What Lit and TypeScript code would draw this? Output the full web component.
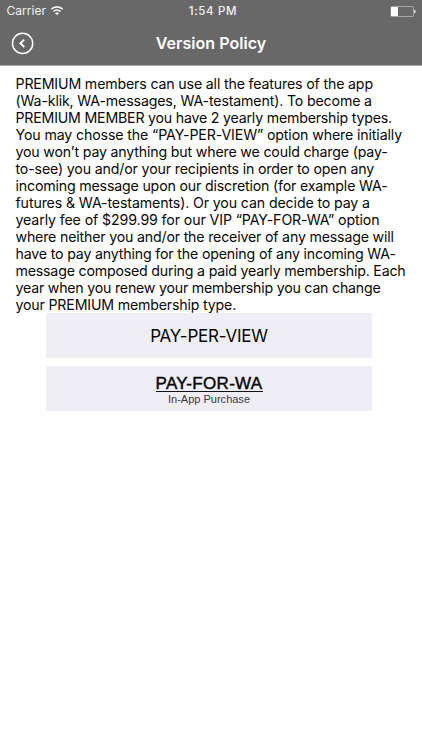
import { LitElement, html, css } from "lit";
import { customElement, property } from "lit/decorators.js";

/** One line of text whose tracking is adjusted to reach a set width. */
@customElement("fit-text")
class FitText extends LitElement {
  @property({ type: Number }) width = 0;
  @property() text = "";

  static styles = css`
    :host { display: block; white-space: nowrap; }
    .run { display: inline-block; white-space: pre; }
  `;

  async firstUpdated() {
    await document.fonts.ready;
    const run = this.renderRoot.querySelector<HTMLElement>(".run")!;
    const natural = run.getBoundingClientRect().width;
    const spacing = (this.width - natural) / this.text.length;
    run.style.letterSpacing = `${spacing.toFixed(4)}px`;
  }

  render() {
    return html`<span class="run">${this.text}</span>`;
  }
}

const LINES: [string, number][] = [
  ["PREMIUM members can use all the features of the app", 357.4],
  ["(Wa-klik, WA-messages, WA-testament). To become a", 356.4],
  ["PREMIUM MEMBER you have 2 yearly membership types.", 376.4],
  ["You may chosse the “PAY-PER-VIEW” option where initially", 386.5],
  ["you won’t pay anything but where we could charge (pay-", 372],
  ["to-see) you and/or your recipients in order to open any", 358.6],
  ["incoming message upon our discretion (for example WA-", 372],
  ["futures & WA-testaments). Or you can decide to pay a", 354.4],
  ["yearly fee of $299.99 for our VIP “PAY-FOR-WA” option", 364],
  ["where neither you and/or the receiver of any message will", 378.2],
  ["have to pay anything for the opening of any incoming WA-", 380.3],
  ["message composed during a paid yearly membership. Each", 390],
  ["year when you renew your membership you can change", 365],
  ["your PREMIUM membership type.", 220.6],
];

@customElement("app-root")
class AppRoot extends LitElement {
  static styles = css`
    :host {
      display: block;
      height: 750px;
      background: #fff;
      color: #080808;
      font-family: Inter, "Liberation Sans", sans-serif;
      overflow: hidden;
    }
    .top { height: 65px; background: #686868; border-bottom: 1px solid #a9a9a9; color: #fff; }
    .status, .nav {
      display: grid;
      grid-template-columns: 1fr auto 1fr;
      align-items: center;
    }
    .status { height: 22px; font-size: 12px; color: #f0f0f0; }
    .carrier { display: flex; align-items: center; gap: 4px; padding: 0 0 2px 6.5px; }
    .wifi { display: block; margin-bottom: 0; }
    .time { font-size: 11.5px; font-weight: 500; padding-left: 4px; }
    .battery { justify-self: end; margin-right: 6px; display: block; }
    .nav { height: 42px; }
    .back { display: block; margin-left: 11px; margin-top: 1px; }
    .title { font-size: 16px; font-weight: 600; }
    .copy { padding: 9px 0 0 15.5px; font-size: 14.2px; line-height: 17px; }
    .options { display: flex; flex-direction: column; gap: 8.5px; width: 326px; margin-left: 46px; }
    .option {
      height: 44.5px;
      background: #efeef4;
      display: flex;
      flex-direction: column;
      align-items: center;
      justify-content: center;
    }
    .view { font-size: 17px; line-height: 21px; padding-top: 2px; }
    .vip {
      font: 400 17px/18px "Liberation Sans", Arial, sans-serif;
      -webkit-text-stroke: 0.45px #080808;
      border-bottom: 1px solid #111;
      height: 16px;
      margin-top: 4px;
    }
    .note {
      font: 400 11px/13px "Liberation Sans", Arial, sans-serif;
      color: #3a3a3c;
      margin-top: 1px;
    }
  `;

  render() {
    return html`
      <header class="top">
        <div class="status">
          <div class="carrier">
            <fit-text text="Carrier" .width=${39.5}></fit-text>
            <svg class="wifi" width="14" height="11" viewBox="0 0 14 11" fill="none" stroke="#f4f4f4" stroke-width="1.7">
              <path d="M1.3 4.2a8.2 8.2 0 0 1 11.4 0" />
              <path d="M3.5 6.5a5 5 0 0 1 7 0" />
              <path d="M7 10.2 5 8.2a2.9 2.9 0 0 1 4 0z" fill="#f4f4f4" stroke="none" />
            </svg>
          </div>
          <fit-text class="time" text="1:54 PM" .width=${48.5}></fit-text>
          <svg class="battery" width="26" height="11" viewBox="0 0 26 11">
            <rect x="1" y=".5" width="22.5" height="10" rx=".7" fill="none" stroke="#a6a6a6" />
            <rect x="1" y="1" width="7" height="9" fill="#fff" />
            <path d="M24 4h1.5v3H24z" fill="#d8d8d8" />
          </svg>
        </div>
        <div class="nav">
          <svg class="back" width="23" height="23" viewBox="0 0 23 23" fill="none" stroke="#fff">
            <circle cx="11.6" cy="11.4" r="10.1" stroke-width="1.5" />
            <path d="M13.2 7.6 9.4 11.3l3.8 3.7" stroke-width="1.9" />
          </svg>
          <fit-text class="title" text="Version Policy" .width=${110.5}></fit-text>
          <span></span>
        </div>
      </header>
      <main>
        <div class="copy">
          ${LINES.map(([text, width]) => html`<fit-text .text=${text} .width=${width}></fit-text>`)}
        </div>
        <div class="options">
          <div class="option"><fit-text class="view" text="PAY-PER-VIEW" .width=${117.5}></fit-text></div>
          <div class="option">
            <fit-text class="vip" text="PAY-FOR-WA" .width=${107}></fit-text>
            <fit-text class="note" text="In-App Purchase" .width=${82}></fit-text>
          </div>
        </div>
      </main>
    `;
  }
}
